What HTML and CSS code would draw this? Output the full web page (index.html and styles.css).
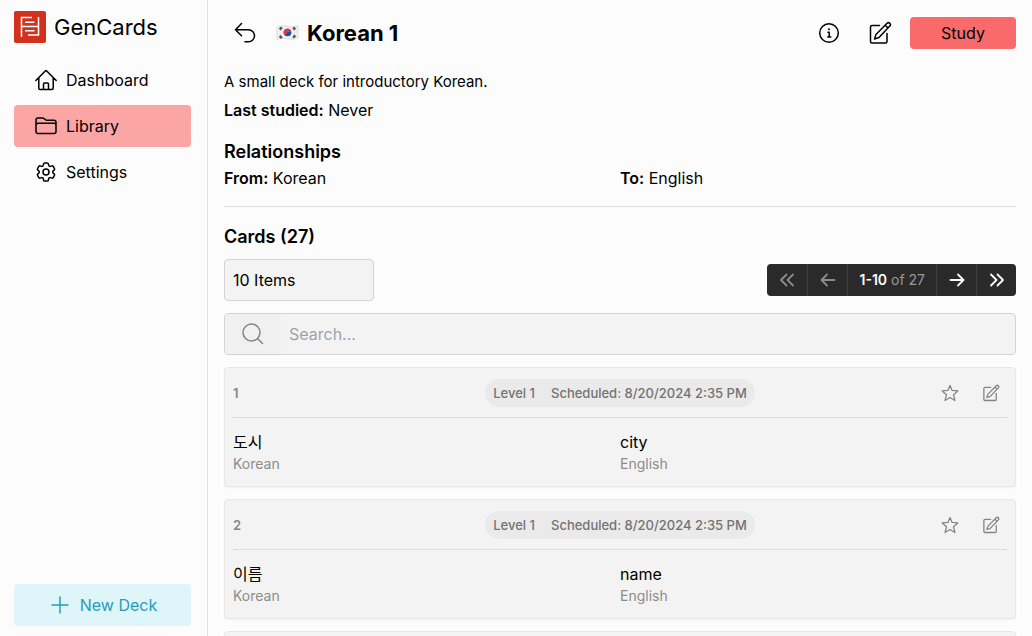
FILE: index.html
```html
<!DOCTYPE html>
<html lang="en">
<head>
<meta charset="utf-8">
<meta name="viewport" content="width=device-width, initial-scale=1">
<title>GenCards</title>
<link rel="stylesheet" href="styles.css">
</head>
<body>
<svg class="defs" aria-hidden="true">
  <symbol id="edit" viewBox="0 0 24 24">
    <path d="M11.500 4.500H4A1.500 1.500 0 0 0 2.500 6V20.500A1.500 1.500 0 0 0 4 22H17.500A1.500 1.500 0 0 0 19 20.500V12.500"/>
    <path d="M19 2.300a1.950 1.950 0 0 1 2.800 2.800L11 16.500 6.500 18 8 13.500zM17.200 4.200l2.700 2.700"/>
  </symbol>
  <symbol id="star" viewBox="0 0 24 24">
    <path d="M12 2l2.800 6.600 7.700.6-5.900 5 2 7.800-6.600-4-6.600 4 2-7.800-5.900-5 7.700-.6z"/>
  </symbol>
</svg>
<div class="app">
  <aside class="sidebar">
    <a class="brand" href="#">
      <svg class="logo" viewBox="0 0 32 32" aria-hidden="true"><rect width="32" height="32" rx="2" fill="#d3301d"/><path d="M18 6.500H7.500V26M7.500 15.500H24.500M24.500 6V24H14M11 11.200H20.500M11 19.800H20.500" fill="none" stroke="#fff" stroke-width="1.500"/></svg>
      <span>GenCards</span>
    </a>
    <nav class="nav">
      <a class="nav-item" href="#"><svg class="icon" viewBox="0 0 24 24"><path d="M1.800 12.500 11.300 3a1 1 0 0 1 1.400 0L22.200 12.500M4.800 10v10.500A1.500 1.500 0 0 0 6.300 21.500H17.700a1.500 1.500 0 0 0 1.500-1.500V10M9.500 21.500v-5.500a1 1 0 0 1 1-1h3a1 1 0 0 1 1 1V21.500"/></svg>Dashboard</a>
      <a class="nav-item active" href="#" aria-current="page"><svg class="icon" viewBox="0 0 24 24"><path d="M4 9.300h16a2 2 0 0 1 2 2v6.300a2 2 0 0 1-2 2H4a2 2 0 0 1-2-2v-6.300a2 2 0 0 1 2-2zM2 11.500V6a2 2 0 0 1 2-2H8.300a3 3 0 0 1 1.900.7l1 .8a3 3 0 0 0 1.900.7H20a2 2 0 0 1 2 2V11.500"/></svg>Library</a>
      <a class="nav-item" href="#"><svg class="icon" viewBox="0 0 24 24"><path d="M9.594 3.940c.09-.542.56-.94 1.110-.94h2.593c.55 0 1.020.398 1.110.94l.213 1.281c.063.374.313.686.645.87.074.04.147.083.22.127.325.196.72.257 1.075.124l1.217-.456a1.125 1.125 0 0 1 1.370.49l1.296 2.247a1.125 1.125 0 0 1-.26 1.431l-1.003.827c-.293.241-.438.613-.43.992a7.723 7.723 0 0 1 0 .255c-.008.378.137.75.43.991l1.004.827c.424.35.534.955.26 1.430l-1.298 2.247a1.125 1.125 0 0 1-1.369.491l-1.217-.456c-.355-.133-.75-.072-1.076.124a6.470 6.470 0 0 1-.22.128c-.331.183-.581.495-.644.869l-.213 1.281c-.09.543-.56.94-1.110.94h-2.594c-.55 0-1.019-.398-1.110-.94l-.213-1.281c-.062-.374-.312-.686-.644-.87a6.520 6.520 0 0 1-.22-.127c-.325-.196-.72-.257-1.076-.124l-1.217.456a1.125 1.125 0 0 1-1.369-.49l-1.297-2.247a1.125 1.125 0 0 1 .26-1.431l1.004-.827c.292-.24.437-.613.43-.991a6.932 6.932 0 0 1 0-.255c.007-.38-.138-.751-.43-.992l-1.004-.827a1.125 1.125 0 0 1-.26-1.430l1.297-2.247a1.125 1.125 0 0 1 1.370-.491l1.216.456c.356.133.751.072 1.076-.124.072-.044.146-.086.22-.128.332-.183.582-.495.644-.869l.214-1.280Z"/><circle cx="12" cy="12" r="3"/></svg>Settings</a>
    </nav>
    <button class="new-deck" type="button"><svg class="icon" viewBox="0 0 24 24"><path d="M12 4v16M4 12h16"/></svg>New Deck</button>
  </aside>
  <main class="main">
    <header class="head">
      <button class="icon-btn" type="button" aria-label="Back"><svg class="icon" viewBox="0 0 24 24"><path d="M8.500 2.500 2.500 8.800l6 6M2.500 8.800h13a6 6 0 0 1 0 12H12"/></svg></button>
      <h1><svg class="flag" viewBox="0 0 24 18" aria-hidden="true"><path d="M1 3q5-3 11-1t11-1v13q-5 3-11 1t-11 1z" fill="#eeeeee" stroke="#d5d5d5" stroke-width=".7"/><circle cx="12" cy="8.500" r="4" fill="#17519d"/><path d="M8.300 10a4 4 0 1 1 7.500-3c-1 2.500-2.700 0-3.900 1.600S9.300 12.300 8.300 10z" fill="#e23840"/><path d="M4 5.500l2-2.500M4 12l2 2.500M18 3l2 2.500M18 14l2-2.500" stroke="#555" stroke-width="2.600"/></svg>Korean 1</h1>
      <div class="head-actions">
        <button class="icon-btn" type="button" aria-label="Info"><svg class="icon" viewBox="0 0 24 24"><circle cx="12" cy="12" r="9.300"/><path d="M11 11.300h1.200v4.700M10.800 16h3"/><circle class="dot" cx="12" cy="8.300" r="1"/></svg></button>
        <button class="icon-btn" type="button" aria-label="Edit deck"><svg class="icon"><use href="#edit"/></svg></button>
        <button class="study" type="button">Study</button>
      </div>
    </header>
    <section class="about">
      <p class="summary">A small deck for introductory Korean.</p>
      <p><b>Last studied:</b> Never</p>
    </section>
    <section class="relations">
      <h2>Relationships</h2>
      <div class="pair"><p><b>From:</b> Korean</p><p><b>To:</b> English</p></div>
    </section>
    <section class="cards">
      <h2>Cards (27)</h2>
      <div class="toolbar">
        <select class="page-size" aria-label="Items per page"><option>10 Items</option><option>25 Items</option><option>50 Items</option></select>
        <div class="pager">
          <button type="button" disabled aria-label="First page"><svg viewBox="0 0 16 16"><path d="M7.500 2.500 2 8l5.500 5.500M14 2.500 8.500 8l5.500 5.500"/></svg></button>
          <button type="button" disabled aria-label="Previous page"><svg viewBox="0 0 16 16"><path d="M7 2.500 1.500 8 7 13.500M1.500 8h13"/></svg></button>
          <span class="range"><b>1-10</b> of 27</span>
          <button type="button" aria-label="Next page"><svg viewBox="0 0 16 16"><path d="M9 2.500 14.500 8 9 13.500M1.500 8h13"/></svg></button>
          <button type="button" aria-label="Last page"><svg viewBox="0 0 16 16"><path d="M2 2.500 7.500 8 2 13.500M8.500 2.500 14 8l-5.500 5.500"/></svg></button>
        </div>
      </div>
      <label class="search"><span class="search-icon"><svg class="icon" viewBox="0 0 24 24"><circle cx="10.500" cy="10.500" r="8.500"/><path d="M16.700 16.700l4.800 4.800"/></svg></span><input type="search" placeholder="Search..." aria-label="Search cards"></label>
      <article class="card">
        <div class="card-head"><span class="num">1</span><div class="pill"><span>Level 1</span><span>Scheduled: 8/20/2024 2:35 PM</span></div><div class="card-actions"><button type="button" aria-label="Star"><svg class="icon"><use href="#star"/></svg></button><button type="button" aria-label="Edit card"><svg class="icon"><use href="#edit"/></svg></button></div></div>
        <div class="pair"><div><p class="term" lang="ko">도시</p><p class="lang">Korean</p></div><div><p class="term">city</p><p class="lang">English</p></div></div>
      </article>
      <article class="card">
        <div class="card-head"><span class="num">2</span><div class="pill"><span>Level 1</span><span>Scheduled: 8/20/2024 2:35 PM</span></div><div class="card-actions"><button type="button" aria-label="Star"><svg class="icon"><use href="#star"/></svg></button><button type="button" aria-label="Edit card"><svg class="icon"><use href="#edit"/></svg></button></div></div>
        <div class="pair"><div><p class="term" lang="ko">이름</p><p class="lang">Korean</p></div><div><p class="term">name</p><p class="lang">English</p></div></div>
      </article>
      <article class="card">
        <div class="card-head"></div>
      </article>
    </section>
  </main>
</div>
</body>
</html>
```
FILE: styles.css
```css
*, *::before, *::after { box-sizing: border-box; }
body, h1, h2, p { margin: 0; }
body {
  font: 16px/24px Inter, "Noto Sans CJK KR", sans-serif;
  color: #000;
  background: #fcfcfc;
}
button, input, select { font: inherit; color: inherit; }
button { border: 0; background: none; padding: 0; cursor: pointer; }
a { color: inherit; text-decoration: none; }
b { font-weight: 600; }
.defs { display: none; }
.icon { width: 24px; height: 24px; fill: none; stroke: currentColor; stroke-width: 1.5; stroke-linecap: round; stroke-linejoin: round; display: block; }
.dot { fill: currentColor; stroke: none; }

.app { display: flex; height: 100vh; overflow: hidden; }
.sidebar { width: 208px; flex: none; display: flex; flex-direction: column; padding: 11px 16px 10px 14px; border-right: 1px solid #e2e2e2; }
.brand { display: flex; align-items: center; gap: 8px; font-size: 22px; line-height: 32px; }
.logo { width: 32px; height: 32px; }
.nav { display: flex; flex-direction: column; gap: 4px; margin-top: 16px; }
.nav-item { display: flex; align-items: center; gap: 8px; height: 42px; padding: 0 20px; border-radius: 4px; }
.active { background: #fca5a5; }
.new-deck { display: flex; align-items: center; justify-content: center; gap: 8px; height: 42px; margin-top: auto; border-radius: 4px; background: #def5fa; color: #2a9cb8; }

.main { flex: 1; min-width: 0; padding: 16px; overflow: hidden; }
.head { display: flex; align-items: center; height: 34px; }
.icon-btn { display: grid; place-items: center; width: 42px; height: 32px; }
h1 { display: flex; align-items: center; gap: 8px; margin-left: 10px; font-size: 22px; line-height: 32px; font-weight: 700; }
.flag { width: 23px; height: 18px; }
.head-actions { display: flex; align-items: center; gap: 9px; margin-left: auto; }
.study { width: 106px; height: 32px; border-radius: 4px; background: #f96a6a; }
.about { margin-top: 18px; line-height: 28px; }
.summary { font-size: 15px; }
.relations { padding: 14px 0 16px; border-bottom: 1px solid #e2e2e2; }
h2 { font-size: 18px; line-height: 28px; font-weight: 600; }
.pair { display: grid; grid-template-columns: 1fr 1fr; }
.cards { display: flex; flex-direction: column; gap: 12px; padding-top: 16px; }
.cards h2 { margin-bottom: -4px; }
.toolbar { display: flex; align-items: center; justify-content: space-between; }
.page-size { appearance: none; width: 150px; height: 42px; padding: 0 8px; border: 1px solid #d4d4d4; border-radius: 4px; background: #f3f3f3; }
.pager { display: flex; height: 32px; border-radius: 4px; overflow: hidden; background: #2a2a2a; color: #fff; font-size: 14px; line-height: 32px; }
.pager > * + * { border-left: 1px solid #404040; }
.pager button { display: grid; place-items: center; width: 40px; }
.pager button:disabled { color: #8c8c8c; }
.pager svg { width: 16px; height: 16px; fill: none; stroke: currentColor; stroke-width: 1.8; stroke-linecap: round; stroke-linejoin: round; }
.range { padding: 0 11px; color: #999; }
.range b { color: #fff; }
.search { display: flex; height: 42px; border: 1px solid #d4d4d4; border-radius: 4px; background: #f3f3f3; overflow: hidden; }
.search-icon { display: grid; place-items: center; width: 56px; background: #f0f0f0; color: #858585; }
.search input { flex: 1; min-width: 0; border: 0; outline: 0; background: none; padding: 0 8px; appearance: none; }
.search input::placeholder { color: #9ca3af; opacity: 1; }
.card { flex: none; padding: 0 8px 12px; border: 1px solid #e8e8e8; border-radius: 4px; background: #f3f3f3; box-shadow: 0 1px 2px #0000000d; }
.card-head { display: grid; grid-template-columns: 1fr auto 1fr; align-items: center; height: 50px; border-bottom: 1px solid #dddddd; font-size: 13px; font-weight: 500; color: #737373; }
.num { color: #858585; font-weight: 600; }
.pill { display: flex; gap: 16px; padding: 0 8px; line-height: 28px; border-radius: 14px; background: #eaeaea; }
.card-actions { display: flex; justify-content: flex-end; gap: 23px; padding-right: 7px; color: #858585; }
.card-actions .icon { width: 18px; height: 18px; stroke-width: 1.7; }
.card .pair { padding-top: 12px; }
.lang { font-size: 14px; line-height: 20px; color: #8c8c8c; }
```
